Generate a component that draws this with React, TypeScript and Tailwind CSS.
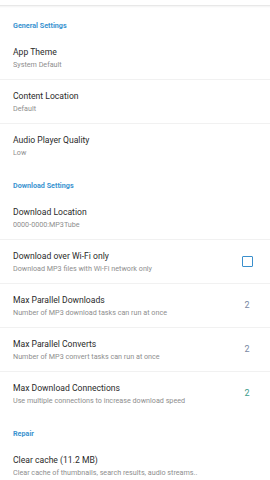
import React from 'react';

type Item = {
  title: string;
  sub: string;
  right?: React.ReactNode;
  divider?: boolean;
};

function SectionHeader({ label }: { label: string }) {
  return (
    <div className="h-[28px] pt-[13px] px-[13px]">
      <div className="text-[7.2px] leading-[10px] font-bold text-[#3a93d0]">{label}</div>
    </div>
  );
}

function Row({ title, sub, right, divider }: Item) {
  return (
    <div
      className={`h-[44px] flex items-center pl-[13px] pr-[17px] ${
        divider ? 'border-b border-[#f1f1f1]' : ''
      }`}
    >
      <div className="flex-1 min-w-0">
        <div className="text-[8.6px] leading-[13px] text-[#2a2a2a]">{title}</div>
        <div className="text-[7.2px] leading-[11px] text-[#8e8e8e] truncate">{sub}</div>
      </div>
      {right && <div className="w-[12px] flex justify-center">{right}</div>}
    </div>
  );
}

function Num({ teal }: { teal?: boolean }) {
  return (
    <span className={`text-[9px] ${teal ? 'text-[#3e9c8c]' : 'text-[#7a87a3]'}`}>2</span>
  );
}

export default function App() {
  return (
    <div
      className="w-[270px] h-[480px] bg-white overflow-hidden"
      style={{ fontFamily: 'Roboto, "Liberation Sans", sans-serif' }}
    >
      {/* toolbar edge */}
      <div className="h-[6px] bg-white border-b border-[#e8e8e8]" />
      <div className="h-[2px] bg-gradient-to-b from-[#f3f3f3] to-white" />

      <SectionHeader label="General Settings" />
      <Row title="App Theme" sub="System Default" divider />
      <Row title="Content Location" sub="Default" divider />
      <Row title="Audio Player Quality" sub="Low" />

      <SectionHeader label="Download Settings" />
      <Row title="Download Location" sub="0000-0000:MP3Tube" divider />
      <Row
        title="Download over Wi-Fi only"
        sub="Download MP3 files with Wi-Fi network only"
        right={<div className="w-[11px] h-[11px] border-[1.5px] border-[#3a8fcc] rounded-[1px]" />}
        divider
      />
      <Row
        title="Max Parallel Downloads"
        sub="Number of MP3 download tasks can run at once"
        right={<Num />}
        divider
      />
      <Row
        title="Max Parallel Converts"
        sub="Number of MP3 convert tasks can run at once"
        right={<Num />}
        divider
      />
      <Row
        title="Max Download Connections"
        sub="Use multiple connections to increase download speed"
        right={<Num teal />}
      />

      <SectionHeader label="Repair" />
      <Row title="Clear cache (11.2 MB)" sub="Clear cache of thumbnails, search results, audio streams.." />
    </div>
  );
}
